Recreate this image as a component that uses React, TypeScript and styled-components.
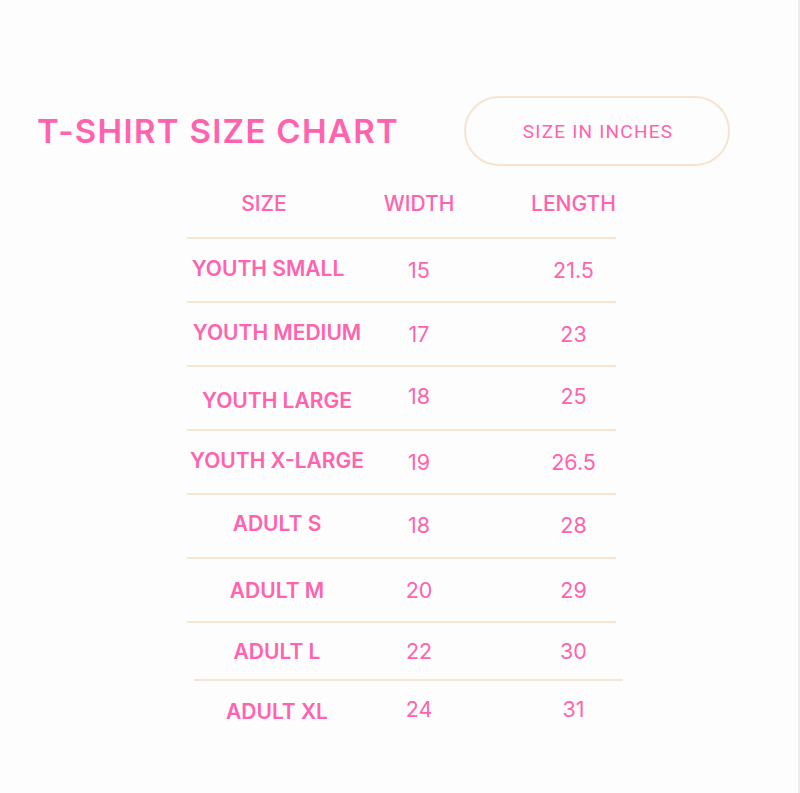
import React from "react";
import styled, { createGlobalStyle } from "styled-components";

const Global = createGlobalStyle`
  html, body { margin: 0; padding: 0; background: #fdfdfd; }
  body { font-family: Inter, "Noto Sans", Roboto, sans-serif; }
`;

const PINK = "#ff63ad";
const LINE = "#f6e3d0";

const Page = styled.div`
  box-sizing: border-box;
  width: 800px;
  height: 793px;
  border-right: 2px solid #ececec;
  padding: 96px 0 0 37px;
  display: flex;
  flex-direction: column;
`;

const Header = styled.header`
  display: flex;
  align-items: center;
`;

const Title = styled.h1`
  margin: 0;
  width: 427px;
  color: ${PINK};
  font-family: Inter, sans-serif;
  font-weight: 600;
  font-size: 33px;
  letter-spacing: 1.3px;
  line-height: 1;
  white-space: nowrap;
`;

const Pill = styled.div`
  box-sizing: border-box;
  width: 266px;
  height: 70px;
  border: 2px solid ${LINE};
  border-radius: 35px;
  display: flex;
  align-items: center;
  justify-content: center;
  color: ${PINK};
  font-family: Roboto, Inter, sans-serif;
  font-size: 19px;
  letter-spacing: 1.2px;
  padding-left: 2px;
`;

const Table = styled.div`
  margin: 8px 0 0 150px;
  width: 429px;
  display: flex;
  flex-direction: column;
`;

const Row = styled.div<{ $h: number; $line?: boolean; $lineShift?: number; $pb?: number }>`
  display: grid;
  grid-template-columns: 180px 104px 145px;
  align-items: center;
  height: ${(p) => p.$h}px;
  box-sizing: border-box;
  padding-bottom: ${(p) => p.$pb ?? 0}px;
  position: relative;
  &::after {
    content: "";
    display: ${(p) => (p.$line ? "block" : "none")};
    position: absolute;
    left: ${(p) => p.$lineShift ?? 0}px;
    bottom: -1px;
    width: 429px;
    height: 2px;
    background: ${LINE};
  }
`;

const Cell = styled.div<{ $bold?: boolean; $dx?: number; $dy?: number; $pad?: number }>`
  text-align: center;
  color: ${PINK};
  font-family: Inter, sans-serif;
  font-size: ${(p) => (p.$bold ? 21 : 21.5)}px;
  font-weight: ${(p) => (p.$bold ? 600 : 400)};
  white-space: nowrap;
  padding-left: ${(p) => p.$pad ?? 0}px;
  transform: translate(${(p) => p.$dx ?? 0}px, ${(p) => p.$dy ?? 0}px);
`;

const HeadCell = styled(Cell)`
  font-size: 21px;
  font-weight: 500;
`;

type R = { size: string; w: string; l: string; h: number; dx?: number; dy?: number; ndy?: number; line?: boolean; lineShift?: number };

const rows: R[] = [
  { size: "YOUTH SMALL", w: "15", l: "21.5", h: 64, dx: -9, dy: -2, line: true },
  { size: "YOUTH MEDIUM", w: "17", l: "23", h: 64, dy: -2, line: true },
  { size: "YOUTH LARGE", w: "18", l: "25", h: 64, dy: 2, ndy: -2, line: true },
  { size: "YOUTH X-LARGE", w: "19", l: "26.5", h: 64, dy: -2, line: true },
  { size: "ADULT S", w: "18", l: "28", h: 64, dy: -3, ndy: -1, line: true },
  { size: "ADULT M", w: "20", l: "29", h: 64, line: true },
  { size: "ADULT L", w: "22", l: "30", h: 58, line: true, lineShift: 7 },
  { size: "ADULT XL", w: "24", l: "31", h: 62, dy: 0, ndy: -2 },
];

export default function App() {
  return (
    <>
      <Global />
      <Page>
        <Header>
          <Title>T-SHIRT SIZE CHART</Title>
          <Pill>SIZE IN INCHES</Pill>
        </Header>
        <Table>
          <Row $h={64} $pb={6} $line>
            <HeadCell $dx={-13}>SIZE</HeadCell>
            <HeadCell>WIDTH</HeadCell>
            <HeadCell $pad={60}>LENGTH</HeadCell>
          </Row>
          {rows.map((r) => (
            <Row key={r.size} $h={r.h} $line={r.line} $lineShift={r.lineShift}>
              <Cell $bold $dx={r.dx} $dy={r.dy}>{r.size}</Cell>
              <Cell $dy={r.ndy}>{r.w}</Cell>
              <Cell $pad={60} $dy={r.ndy}>{r.l}</Cell>
            </Row>
          ))}
        </Table>
      </Page>
    </>
  );
}
